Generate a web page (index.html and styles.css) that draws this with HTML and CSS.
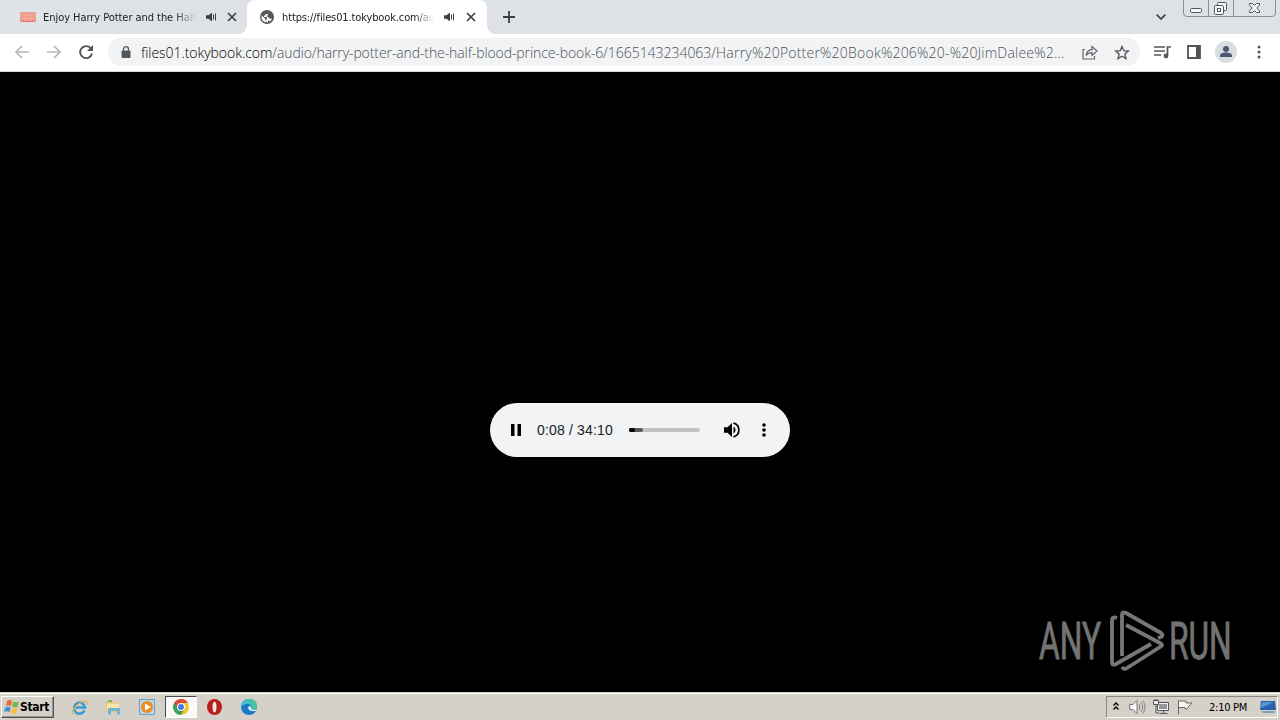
FILE: index.html
```html
<!DOCTYPE html>
<html lang="en">
<head>
    <meta charset="UTF-8">
    <meta name="viewport" content="width=device-width, initial-scale=1.0">
    <title>files01.tokybook.com</title>
    <link rel="stylesheet" href="styles.css">
</head>
<body>
    <svg class="defs" width="0" height="0">
        <symbol id="close" viewBox="0 0 10 10"><path d="M1 1l8 8M9 1L1 9" stroke="#3c4043" stroke-width="1.7"/></symbol>
        <symbol id="sound" viewBox="0 0 11 10"><path d="M0 3.3h2.500L6 .5v9L2.500 6.700H0z" fill="#3c4043"/><path d="M7.500 2.500v5M9.500 1.500v7" stroke="#3c4043" stroke-width="1"/></symbol>
    </svg>

    <div class="tab-strip">
        <div class="tab">
            <svg class="favicon" width="16" height="10" viewBox="0 0 16 10"><rect width="16" height="10" rx="1.500" fill="#ee9b8c"/><path d="M1 3h14M1 6.500h14M5 1v8M10.500 1v8" stroke="#f3b3a5" stroke-width=".8"/><path d="M1 9.500h14" stroke="#db7a6b"/></svg>
            <span class="tab-title first-title">Enjoy Harry Potter and the Half</span>
            <svg class="tab-sound" width="11" height="10"><use href="#sound"/></svg>
            <svg class="tab-close" width="10" height="10"><use href="#close"/></svg>
        </div>
        <div class="tab active">
            <svg class="favicon" width="14" height="14" viewBox="0 0 14 14"><circle cx="7" cy="7" r="7" fill="#54585c"/><path d="M8.500 1.500v1.300L7 4H5.500v1.500H4V7h4.300L9 8.500h2.700c-.2 1.300-.8 2.200-1.700 2.900L9 10.500H8v1.700l-1.500.3V11L5 9.500V8.300L1.600 5.500 1.500 8c.4 2 2 3.800 4.300 4.300" fill="#fff"/></svg>
            <span class="tab-title second-title">https://files01.tokybook.com/au</span>
            <svg class="tab-sound" width="11" height="10"><use href="#sound"/></svg>
            <svg class="tab-close" width="10" height="10"><use href="#close"/></svg>
        </div>
        <svg class="new-tab" width="12" height="12" viewBox="0 0 12 12"><path d="M6 0v12M0 6h12" stroke="#3c4043" stroke-width="1.800"/></svg>
        <svg class="tab-search" width="10" height="6" viewBox="0 0 10 6"><path d="M.7.700L5 5 9.300.700" fill="none" stroke="#3c4043" stroke-width="1.700"/></svg>
        <svg class="window-buttons" width="94" height="17" viewBox="0 0 94 17">
            <g fill="none" stroke="#8b8e94"><path d="M.5 0v13q0 3.500 3.500 3.500h85q3.500 0 3.500-3.500V0M25.500 0v16M50.500 0v16"/></g>
            <g fill="#f6f7f8" stroke="#54575c"><rect x="7.500" y="8.500" width="11" height="4" rx="1"/><rect x="34.500" y="2.500" width="9" height="8" rx="1"/><rect x="31.500" y="5.500" width="9" height="9" rx="1"/><rect x="34.500" y="8.500" width="3" height="3"/><path d="M66.500 3.500h3l2 2 2-2h3v1.500l-2.700 3 2.700 3v1.500h-3l-2-2-2 2h-3V11l2.700-3-2.700-3z"/></g>
        </svg>
    </div>

    <div class="toolbar">
        <svg class="nav back" width="14" height="14" viewBox="0 0 14 14"><path d="M14 7H1.500M7 1L1 7l6 6" fill="none" stroke="#b5b7ba" stroke-width="1.700"/></svg>
        <svg class="nav forward" width="14" height="14" viewBox="0 0 14 14"><path d="M0 7h12.500M7 1l6 6-6 6" fill="none" stroke="#b5b7ba" stroke-width="1.700"/></svg>
        <svg class="nav reload" width="14" height="14" viewBox="0 0 14 14"><path d="M12 3.600A6 6 0 1 0 13 8.500" fill="none" stroke="#505458" stroke-width="1.900"/><path d="M14 0v6H8z" fill="#505458"/></svg>
        <div class="address">
            <svg class="lock" width="10" height="13" viewBox="0 0 10 13"><rect x=".5" y="4.500" width="9" height="7.500" rx="1" fill="#54585c"/><path d="M2.500 5V3.200a2.500 2.500 0 0 1 5 0V5" fill="none" stroke="#54585c" stroke-width="1.300"/></svg>
            <div class="url"><span class="host">files01.tokybook.com</span><span class="path">/audio/harry-potter-and-the-half-blood-prince-book-6/<span class="number">1665143234063/</span><span class="file">Harry%20Potter%20Book%206%20-%20JimDalee%2...</span></span></div>
            <svg class="share" width="16" height="15" viewBox="0 0 16 15"><path d="M3 4.500H1v9.500h11.500V11M4 10.500c.5-3.700 2.500-5.500 6-5.800V1.500L15 6l-5 4.500V7.600c-2.700 0-4.500.8-6 2.900z" fill="none" stroke="#606367" stroke-width="1.200"/></svg>
            <svg class="star" width="16" height="15" viewBox="0 0 16 15"><path d="M8 1.500l1.800 4.200 4.500.4-3.400 3 1 4.400L8 11.200l-3.900 2.300 1-4.400-3.400-3 4.500-.4z" fill="none" stroke="#54585c" stroke-width="1.400"/></svg>
        </div>
        <svg class="media" width="17" height="14" viewBox="0 0 17 14"><path d="M0 2h11M0 6h11M0 10h7M13.500 11V2H17" fill="none" stroke="#54585c" stroke-width="1.700"/><circle cx="12" cy="11" r="2.400" fill="#54585c"/></svg>
        <svg class="panel" width="14" height="14" viewBox="0 0 14 14"><path d="M1 1h12v12H1z" fill="none" stroke="#505458" stroke-width="1.800"/><path d="M9 1h4v12H9z" fill="#505458"/></svg>
        <svg class="profile" width="22" height="22" viewBox="0 0 22 22"><circle cx="11" cy="11" r="11" fill="#d8dde4"/><circle cx="11" cy="8" r="3" fill="#4b5872"/><path d="M5 16v-1.500c0-2 3-3 6-3s6 1 6 3V16z" fill="#4b5872"/></svg>
        <svg class="menu" width="4" height="14" viewBox="0 0 4 14" fill="#505458"><circle cx="2" cy="2" r="1.500"/><circle cx="2" cy="7" r="1.500"/><circle cx="2" cy="12" r="1.500"/></svg>
    </div>

    <div class="page">
        <div class="player">
            <svg width="10" height="12" viewBox="0 0 10 12"><path d="M0 0h3.500v12H0zM6.500 0H10v12H6.500z"/></svg>
            <span class="time">0:08 / 34:10</span>
            <div class="track"><div class="buffered"><div class="played"></div></div></div>
            <svg class="volume" width="16" height="16" viewBox="0 0 16 16"><path d="M0 5.300h3.500L8 1v14L3.500 10.700H0z"/><path d="M9.500 4.500a4 4 0 0 1 0 7z"/><path d="M9.500 1.200a7 7 0 0 1 0 13.600" fill="none" stroke="#000" stroke-width="1.700"/></svg>
            <svg class="more" width="4" height="14" viewBox="0 0 4 14"><circle cx="2" cy="2" r="1.800"/><circle cx="2" cy="7" r="1.800"/><circle cx="2" cy="12" r="1.800"/></svg>
        </div>
        <div class="watermark">
            <svg width="200" height="64" viewBox="0 0 200 64">
                <g class="brand"><text transform="translate(1 50) scale(.66 1)" textLength="94" lengthAdjust="spacingAndGlyphs">ANY</text><text transform="translate(131 50) scale(.66 1)" textLength="95" lengthAdjust="spacingAndGlyphs">RUN</text></g>
                <g fill="none" stroke="#777" stroke-width="3.800" stroke-linejoin="round">
                    <path d="M84 47V6q0-4 4-2l35 20q3 2 0 4l-3 1"/>
                    <path d="M79 9q-5-2-5 3v41q0 4 4 2l35-20"/>
                    <path d="M88 16l34 18q4 2 0 4L89 59q-3 2-5-1"/>
                </g>
            </svg>
        </div>
    </div>

    <div class="taskbar">
        <div class="start">
            <svg width="16" height="16" viewBox="0 0 16 16"><path d="M3 2q2.500-2 5 0L7 7Q4.500 5.500 2 7z" fill="#e76b32"/><path d="M9 2.500q3 1.500 6 0L13.500 8Q11 9 8 7.500z" fill="#76b652"/><path d="M1.500 8.500Q4 7 6.700 8.500L5.500 13Q3 11.500 0 13z" fill="#3d8ed5"/><path d="M7.700 9q2.700 1.500 5.500 0L12 14q-3 1.500-5.500-.5z" fill="#f4c33a"/></svg>
            <span>Start</span>
        </div>
        <div class="quick">
            <div class="app"><svg width="17" height="17" viewBox="0 0 17 17"><path d="M13.500 11.500A5.500 5.500 0 1 1 14 8.500H4" fill="none" stroke="#369bd7" stroke-width="2.500"/><path d="M2 15C-1 12 10 0 15.500 2.500c1 .5.500 2 .2 2.700" fill="none" stroke="#dfb34d" stroke-width="1.300"/></svg></div>
            <div class="app"><svg width="16" height="16" viewBox="0 0 16 16"><path d="M1 2h6l1 1.500h6V13H1z" fill="#e3c56a"/><path d="M3 1h4v2H3z" fill="#78b96a"/><path d="M2 4.500h12V12H2z" fill="#f7e6a5"/><path d="M3 15.500V9h12v6.500h-3V12H6v3.500z" fill="#70b2d9"/></svg></div>
            <div class="app"><svg width="16" height="16" viewBox="0 0 16 16"><rect x=".5" y=".5" width="15" height="15" fill="#b7d7ef" stroke="#6ba2ca"/><circle cx="8" cy="8" r="6" fill="#ef8b1f"/><path d="M6 4.500v7L12 8z" fill="#fff"/></svg></div>
            <div class="app current"><svg width="16" height="16" viewBox="0 0 16 16"><path d="M8 8V0A8 8 0 0 1 8 16L8 8z" fill="#f7c52e"/><path d="M8 8L1.070 4A8 8 0 0 0 8 16l3.500-6z" fill="#3aa356"/><path d="M1.070 4A8 8 0 0 1 14.930 4H8L5 10z" fill="#df4937"/><circle cx="8" cy="8" r="4" fill="#fff"/><circle cx="8" cy="8" r="3" fill="#3f7fe5"/></svg></div>
            <div class="app opera"><svg width="15" height="16" viewBox="0 0 15 16"><ellipse cx="7.500" cy="8" rx="7.500" ry="8" fill="#b71e20"/><ellipse cx="7.500" cy="8" rx="2" ry="5.500" fill="#f3e6df"/></svg></div>
            <div class="app"><svg width="16" height="16" viewBox="0 0 16 16"><circle cx="8" cy="8" r="8" fill="#187ac6"/><path d="M0 8C0-2 16-3 16 7.500c0 3-4 4-6 2.500 2-3-1-5.500-4-5C3 5 1 7 0 8z" fill="#42bfd0"/><path d="M8 0c5 0 8 3.500 8 7.500 0 3-4 4-6 2.500 2-3 0-5-2-6z" fill="#4fc47f" opacity=".6"/><path d="M7.500 7.500c-1 2 .5 4.500 4 4.500h3l1-2c-2 1-4 1-5.500 0 1-2-.5-3.500-2.500-2.500z" fill="#e5eef0"/></svg></div>
        </div>
        <div class="tray">
            <svg class="chevrons" width="6" height="9" viewBox="0 0 6 9"><path d="M.5 3.500L3 1 5.500 3.500M.5 7.500L3 5 5.500 7.500" fill="none" stroke="#000" stroke-width="1.400"/></svg>
            <svg class="speaker" width="17" height="16" viewBox="0 0 17 16"><path d="M.7 5.500H4l4-4v13l-4-4H.7z" fill="#f8f8f6" stroke="#777"/><path d="M10 5q2 3 0 6M12 3q3.500 5 0 10M14 1.500q4 6.500 0 13" fill="none" stroke="#858585"/></svg>
            <svg class="network" width="16" height="16" viewBox="0 0 16 16"><path d="M4.500 3.500h11v8h-11z" fill="#f3f3f1" stroke="#55585a"/><path d="M6 5h8v5H6z" fill="#92979a"/><path d="M6.500 14.500h8M10.500 12v2" stroke="#55585a"/><path d="M.5 1.500h5v4h-5z" fill="#eee" stroke="#55585a"/><path d="M2 0v2M4 0v2M3 6v8h3" fill="none" stroke="#55585a"/></svg>
            <svg class="flag" width="17" height="16" viewBox="0 0 17 16"><path d="M1.500 15V1.500M1.500 2H9v2h6L12 7l-2 3H8V8.500H1.500" fill="#f8f8f7" stroke="#666"/></svg>
            <span class="clock">2:10 PM</span>
            <svg class="desktop" width="16" height="14" viewBox="0 0 16 14"><path d="M1 1h14l1 9H0z" fill="#2861aa"/><path d="M2 2h12L1 8z" fill="#5794d1"/><path d="M1 11h13l1 2H3z" fill="#7b9fbe"/></svg>
        </div>
    </div>
</body>
</html>
```
FILE: styles.css
```css
body {
    width: 1280px;
    height: 720px;
    margin: 0;
    display: flex;
    flex-direction: column;
    overflow: hidden;
    background: #000;
    color: #202124;
    font-family: "DejaVu Sans Condensed", "DejaVu Sans", sans-serif;
}

svg {
    display: block;
    flex: none;
}

.defs {
    position: absolute;
}

.tab-strip {
    display: flex;
    align-items: center;
    height: 34px;
    background: #dee1e6;
}

.tab {
    box-sizing: border-box;
    display: flex;
    align-items: center;
    width: 247px;
    height: 34px;
    padding-left: 20px;
    flex: none;
}

.tab.active {
    position: relative;
    width: 240px;
    padding-left: 13px;
    background: #fff;
    border-radius: 8px 8px 0 0;
}

.tab.active::before,
.tab.active::after {
    content: "";
    position: absolute;
    bottom: 0;
    width: 8px;
    height: 8px;
}

.tab.active::before {
    left: -8px;
    background: radial-gradient(circle at 0 0, transparent 7.5px, #fff 8px);
}

.tab.active::after {
    right: -8px;
    background: radial-gradient(circle at 100% 0, transparent 7.5px, #fff 8px);
}

.tab-title {
    width: 153px;
    padding-top: 1px;
    overflow: hidden;
    white-space: nowrap;
    font-family: "DejaVu Sans";
    font-stretch: condensed;
    font-size: 11px;
    line-height: 18px;
    -webkit-mask-image: linear-gradient(90deg, #000 86%, transparent);
    mask-image: linear-gradient(90deg, #000 86%, transparent);
}

.first-title {
    margin-left: 7px;
    letter-spacing: -0.05px;
}

.second-title {
    margin-left: 8px;
    letter-spacing: -0.12px;
}

.tab-sound {
    margin-left: 10px;
}

.second-title + .tab-sound {
    margin-left: 9px;
}

.tab-close {
    margin-left: 10px;
}

.second-title ~ .tab-close {
    margin-left: 11px;
}

.new-tab {
    margin-left: 16px;
}

.tab-search {
    margin-left: auto;
}

.window-buttons {
    align-self: flex-start;
    margin: 0 3px 0 17px;
}

.toolbar {
    box-sizing: border-box;
    display: flex;
    align-items: center;
    height: 38px;
    padding: 0 19px 1px 15px;
    background: #fff;
    border-bottom: 1px solid #d5d7da;
}

.forward {
    margin-left: 18px;
}

.reload {
    margin-left: 18px;
}

.address {
    box-sizing: border-box;
    display: flex;
    align-items: center;
    flex: none;
    width: 1032px;
    height: 28px;
    margin-left: 15px;
    padding-left: 13px;
    border-radius: 14px;
    background: #f1f3f4;
}

.url {
    width: 927px;
    margin-left: 10px;
    padding-top: 2px;
    white-space: nowrap;
    font-family: "Open Sans", sans-serif;
    font-weight: 300;
    font-size: 14px;
    line-height: 20px;
}

.host {
    color: #000;
    letter-spacing: -0.05px;
}

.path {
    color: #4d5156;
    letter-spacing: -0.1px;
}

.number {
    letter-spacing: -0.03px;
}

.file {
    letter-spacing: 0.22px;
}

.share {
    margin-left: 14px;
}

.star {
    margin-left: 16px;
}

.media {
    margin-left: 14px;
}

.panel {
    margin-left: 16px;
}

.profile {
    margin-left: 14px;
}

.menu {
    margin-left: 20px;
}

.page {
    flex: 1;
    display: flex;
    flex-direction: column;
    align-items: center;
    background: #000;
}

.player {
    box-sizing: border-box;
    display: flex;
    align-items: center;
    width: 300px;
    height: 54px;
    margin-top: 331px;
    padding-left: 21px;
    border-radius: 27px;
    background: #f1f3f4;
}

.time {
    width: 77px;
    margin-left: 16px;
    white-space: nowrap;
    font: 14px/20px "Liberation Sans", sans-serif;
    letter-spacing: 0.17px;
}

.track {
    width: 71px;
    height: 4px;
    margin-left: 15px;
    border-radius: 2px;
    background: #c0c1c2;
}

.buffered {
    width: 14px;
    height: 4px;
    border-radius: 2px;
    background: #5b5b5b;
}

.played {
    width: 6px;
    height: 4px;
    border-radius: 2px;
    background: #000;
}

.volume {
    margin-left: 24px;
}

.more {
    margin-left: 22px;
}

.watermark {
    align-self: flex-end;
    margin: 152px 42px 0 0;
}

.watermark svg {
    overflow: visible;
}

.brand {
    fill: #737373;
    stroke: #737373;
    stroke-width: 0.9px;
    font: 52px "Roboto", sans-serif;
}

.taskbar {
    box-sizing: border-box;
    display: flex;
    align-items: center;
    height: 28px;
    padding: 2px 2px 0 1px;
    background: #d5d1c9;
    box-shadow: inset 0 1px #d5d1c9, inset 0 2px #fff;
}

.start {
    box-sizing: border-box;
    display: flex;
    align-items: center;
    width: 53px;
    height: 22px;
    padding-left: 2px;
    border: 1px solid;
    border-color: #fff #55534f #55534f #fff;
    box-shadow: inset -1px -1px #99958e;
    color: #000;
    font: bold 12px "DejaVu Sans Condensed", "DejaVu Sans", sans-serif;
    letter-spacing: -0.35px;
}

.quick {
    display: flex;
    gap: 2px;
    margin-left: 9px;
}

.app {
    box-sizing: border-box;
    display: flex;
    align-items: center;
    justify-content: center;
    width: 32px;
    height: 22px;
}

.app.current {
    border: 1px solid;
    border-color: #494844 #fff #fff #494844;
    background: #fafaf9;
}

.opera {
    padding-right: 2px;
}

.tray {
    box-sizing: border-box;
    display: flex;
    align-items: center;
    width: 172px;
    height: 22px;
    margin-left: auto;
    padding-left: 6px;
    border: 1px solid;
    border-color: #8b8780 #fff #fff #8b8780;
}

.chevrons {
    margin-bottom: 2px;
}

.speaker {
    margin-left: 10px;
}

.network {
    margin-left: 7px;
}

.flag {
    margin-left: 8px;
}

.clock {
    width: 42px;
    margin-left: 15px;
    color: #000;
    white-space: nowrap;
    font-family: "DejaVu Sans Condensed", "DejaVu Sans", sans-serif;
    font-size: 11px;
    letter-spacing: -0.25px;
}

.desktop {
    margin-left: 9px;
}
```
